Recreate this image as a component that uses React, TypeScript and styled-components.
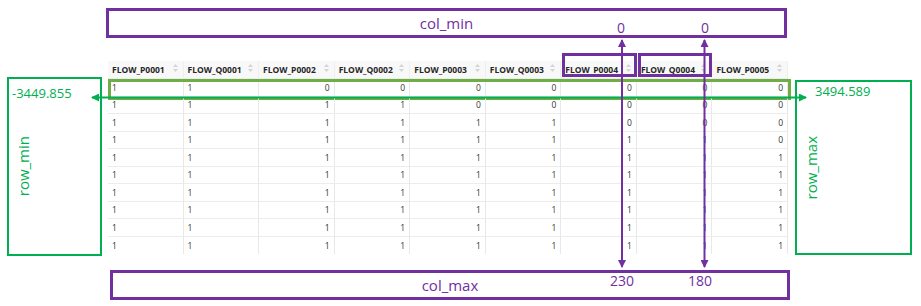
import styled, { createGlobalStyle } from "styled-components";

const PURPLE = "#7030a0";
const GREEN = "#00b050";
const OLIVE = "#70ad47";

const GlobalStyle = createGlobalStyle`
  html, body {
    margin: 0;
    padding: 0;
    background: #ffffff;
  }
  body {
    font-family: "Open Sans", "Noto Sans", sans-serif;
  }
`;

const columns = [
  "FLOW_P0001",
  "FLOW_Q0001",
  "FLOW_P0002",
  "FLOW_Q0002",
  "FLOW_P0003",
  "FLOW_Q0003",
  "FLOW_P0004",
  "FLOW_Q0004",
  "FLOW_P0005",
];

// columns picked out by the col_min / col_max annotation
const marked = ["FLOW_P0004", "FLOW_Q0004"];

const ones = [1, 1, 1, 1, 1, 1, 1, 1, 1];
const rows = [
  [1, 1, 0, 0, 0, 0, 0, 0, 0],
  [1, 1, 1, 1, 0, 0, 0, 0, 0],
  [1, 1, 1, 1, 1, 1, 0, 0, 0],
  [1, 1, 1, 1, 1, 1, 1, 1, 0],
  ones,
  ones,
  ones,
  ones,
  ones,
  ones,
];

const SortIcon = () => (
  <svg width="5" height="8" viewBox="0 0 5 8">
    <path d="M2.5 0 L5 3 L0 3 Z" fill="#d4d4d4" />
    <path d="M2.5 8 L5 5 L0 5 Z" fill="#d4d4d4" />
  </svg>
);

const App = () => {
  return (
    <Page>
      <GlobalStyle />
      <ColBox $ml={106} $mt={8} $w={681}>
        col_min
        <ColValue $x={512} $y={9}>0</ColValue>
        <ColValue $x={596} $y={9}>0</ColValue>
      </ColBox>

      <Middle>
        <RowBox $ml={0} $mt={39} $w={95} $h={179}>
          <RowValue $pl={3} $pt={6}>-3449.855</RowValue>
          <RowLabel>row_min</RowLabel>
        </RowBox>

        <Table>
          <HeadRow>
            {columns.map((c) => (
              <HeadCell key={c} $marked={marked.includes(c)}>
                <span>{c}</span>
                <SortIcon />
              </HeadCell>
            ))}
          </HeadRow>
          {rows.map((r, i) => (
            <DataRow key={i} $highlight={i === 0}>
              {r.map((v, j) => (
                <Cell key={j} $left={j < 2}>
                  {v}
                </Cell>
              ))}
            </DataRow>
          ))}
        </Table>

        <RowBox $ml={7} $mt={42} $w={117} $h={175}>
          <RowValue $pl={18} $pt={1}>3494.589</RowValue>
          <RowLabel>row_max</RowLabel>
        </RowBox>
      </Middle>

      <ColBox $ml={110} $mt={14} $w={680}>
        col_max
        <ColValue $x={509} $y={0}>230</ColValue>
        <ColValue $x={587} $y={0}>180</ColValue>
      </ColBox>

      <Arrows width="921" height="306" viewBox="0 0 921 306">
        <defs>
          <marker
            id="headGreen"
            viewBox="0 0 8 8"
            refX="7"
            refY="4"
            markerWidth="4"
            markerHeight="4"
            orient="auto-start-reverse"
          >
            <path d="M0 0 L8 4 L0 8 Z" fill={GREEN} />
          </marker>
          <marker
            id="headPurple"
            viewBox="0 0 8 8"
            refX="7"
            refY="4"
            markerWidth="4"
            markerHeight="4"
            orient="auto-start-reverse"
          >
            <path d="M0 0 L8 4 L0 8 Z" fill={PURPLE} />
          </marker>
        </defs>
        <line
          x1="92"
          y1="97.5"
          x2="806"
          y2="97.5"
          stroke={GREEN}
          strokeWidth="2"
          markerStart="url(#headGreen)"
          markerEnd="url(#headGreen)"
        />
        <line
          x1="622"
          y1="40"
          x2="622"
          y2="267"
          stroke={PURPLE}
          strokeWidth="2"
          markerStart="url(#headPurple)"
          markerEnd="url(#headPurple)"
        />
        <line
          x1="704.5"
          y1="40"
          x2="704.5"
          y2="267"
          stroke={PURPLE}
          strokeWidth="2"
          markerStart="url(#headPurple)"
          markerEnd="url(#headPurple)"
        />
      </Arrows>
    </Page>
  );
};

const Page = styled.div`
  position: relative;
  width: 921px;
  height: 306px;
  overflow: hidden;
  display: flex;
  flex-direction: column;
  align-items: flex-start;
`;

const ColBox = styled.div<{ $ml: number; $mt: number; $w: number }>`
  position: relative;
  box-sizing: border-box;
  margin-left: ${(p) => p.$ml}px;
  margin-top: ${(p) => p.$mt}px;
  width: ${(p) => p.$w}px;
  height: 30px;
  border: 3px solid ${PURPLE};
  display: flex;
  align-items: center;
  justify-content: center;
  color: ${PURPLE};
  font-size: 15px;
  line-height: 1;
`;

const ColValue = styled.span<{ $x: number; $y: number }>`
  position: absolute;
  left: ${(p) => p.$x}px;
  top: ${(p) => p.$y}px;
  transform: translateX(-50%);
  font-size: 14px;
  line-height: 16px;
  color: ${PURPLE};
`;

const Middle = styled.div`
  display: flex;
  align-items: flex-start;
  height: 218px;
  padding-left: 7px;
`;

const RowBox = styled.div<{ $ml: number; $mt: number; $w: number; $h: number }>`
  box-sizing: border-box;
  margin-left: ${(p) => p.$ml}px;
  margin-top: ${(p) => p.$mt}px;
  width: ${(p) => p.$w}px;
  height: ${(p) => p.$h}px;
  border: 2px solid ${GREEN};
  color: ${GREEN};
  display: grid;
  grid-template: 1fr / 1fr;
`;

const RowValue = styled.div<{ $pl: number; $pt: number }>`
  grid-area: 1 / 1;
  align-self: start;
  padding: ${(p) => p.$pt}px 0 0 ${(p) => p.$pl}px;
  font-size: 13px;
  line-height: 16px;
`;

const RowLabel = styled.div`
  grid-area: 1 / 1;
  align-self: center;
  justify-self: start;
  margin-left: 7px;
  writing-mode: vertical-rl;
  transform: rotate(180deg);
  font-size: 15px;
  line-height: 15px;
`;

const Table = styled.div`
  margin-left: 6px;
  margin-top: 23px;
  width: 680px;
  font-family: "Open Sans", "Noto Sans", sans-serif;
`;

const HeadRow = styled.div`
  display: grid;
  grid-template-columns: repeat(9, 1fr);
  height: 18px;
  background: #f8f8f8;
  border-bottom: 1px solid #ececec;
  box-sizing: border-box;
`;

const HeadCell = styled.div<{ $marked: boolean }>`
  position: relative;
  display: flex;
  justify-content: space-between;
  align-items: center;
  padding: 0 5px 0 4px;
  border-right: 1px solid #efefef;
  font-size: 8.5px;
  font-weight: 700;
  color: #262626;
  white-space: nowrap;

  svg {
    align-self: flex-start;
    margin-top: 3px;
    flex: none;
  }

  ${(p) =>
    p.$marked &&
    `
    &::after {
      content: "";
      position: absolute;
      top: -8px;
      bottom: 1px;
      left: 1px;
      right: -1px;
      border: 3px solid ${PURPLE};
      box-sizing: border-box;
    }
  `}
`;

const DataRow = styled.div<{ $highlight: boolean }>`
  position: relative;
  display: grid;
  grid-template-columns: repeat(9, 1fr);
  height: 17.5px;
  border-bottom: 1px solid #ececec;
  box-sizing: border-box;

  &:last-child {
    border-bottom: none;
  }

  ${(p) =>
    p.$highlight &&
    `
    &::after {
      content: "";
      position: absolute;
      top: 0;
      bottom: -4px;
      left: 0;
      right: -3px;
      border: 3px solid ${OLIVE};
      box-sizing: border-box;
    }
  `}
`;

const Cell = styled.div<{ $left: boolean }>`
  display: flex;
  align-items: center;
  justify-content: ${(p) => (p.$left ? "flex-start" : "flex-end")};
  padding: 0 4px;
  border-right: 1px solid #e8e8e8;
  font-size: 8.5px;
  color: #333333;
`;

const Arrows = styled.svg`
  position: absolute;
  left: 0;
  top: 0;
  pointer-events: none;
  z-index: 2;
`;

export default App;
